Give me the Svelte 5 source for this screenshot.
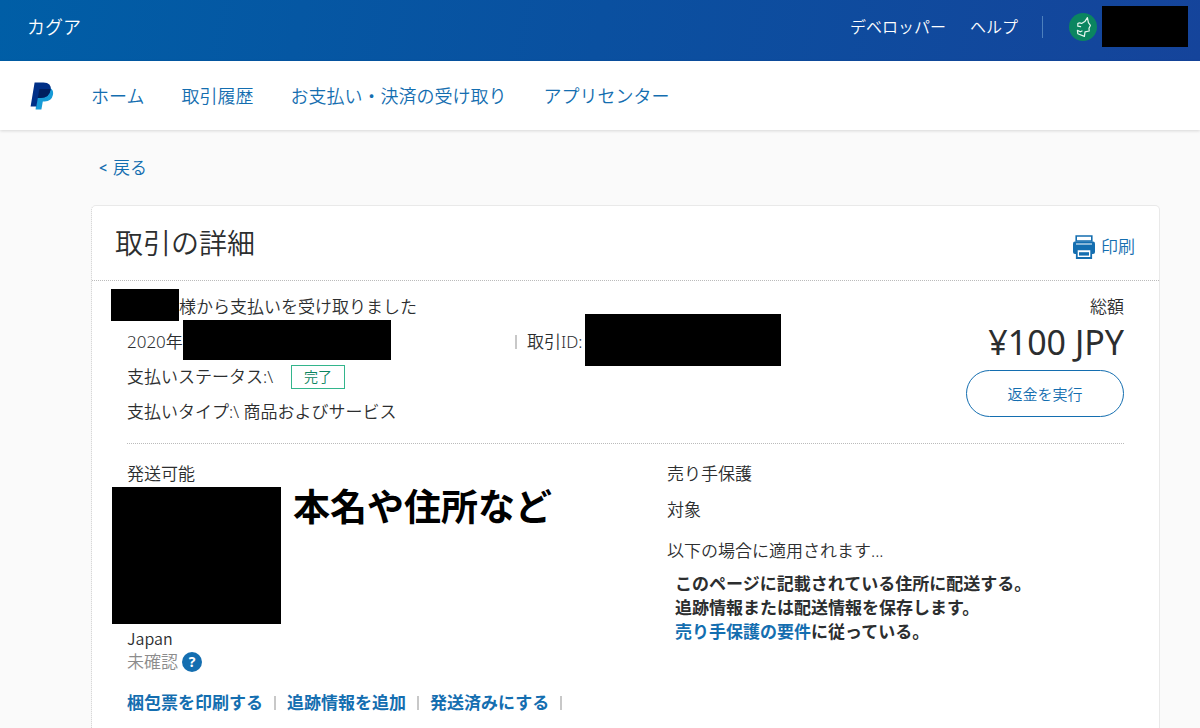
<script lang="ts">
    let navLinks = [
        "ホーム",
        "取引履歴",
        "お支払い・決済の受け取り",
        "アプリセンター"
    ];

    let shippingActions = [
        "梱包票を印刷する",
        "追跡情報を追加",
        "発送済みにする"
    ];
</script>

<div class="page">
    <header class="topbar">
        <span class="brand">カグア</span>
        <div class="account">
            <a href="#developer">デベロッパー</a>
            <a href="#help">ヘルプ</a>
            <span class="bar"></span>
            <svg class="avatar" viewBox="0 0 28 28" aria-hidden="true">
                <circle cx="14" cy="14" r="14" fill="#0b8560" />
                <path
                    d="M11.6 13.6 L8.8 13.2 L8.8 10.4 Q10.6 9.2 12.6 10.4 L15.8 8.6 L18.4 4.6 L19.4 9.6 L21.4 12.4 L20 15.2 L20.2 18 L16 18.8 L15.4 23.4 L8.8 20.8 L8.4 17.4 L11.4 18.8 L13 18"
                    fill="none"
                    stroke="#e6f6ee"
                    stroke-width="1.2"
                    stroke-linejoin="round"
                    stroke-linecap="round"
                />
            </svg>
            <span class="mask mask-account"></span>
        </div>
    </header>

    <nav class="mainnav">
        <a class="logo" href="#home" aria-label="PayPal">
            <svg viewBox="0 0 24 28">
                <path d="M8 6 H20.5 Q24 8.6 22.9 13 Q21.6 19.4 14.6 19.4 H12.8 L11.4 27.4 H5.6 Z" fill="#179bd7" />
                <path d="M4.6 0.6 H13.4 Q21.8 0.8 20.6 8 Q19.2 15.8 10.6 16 H7.8 L6.4 24.4 H0.6 Z" fill="#003087" />
                <path d="M9.4 7 H20.6 Q19.6 15.8 10.6 16 H7.8 Z" fill="#001f5f" />
            </svg>
        </a>
        {#each navLinks as link}
            <a href="#nav">{link}</a>
        {/each}
    </nav>

    <main>
        <a class="back" href="#back"><b>&lt;</b>戻る</a>

        <section class="card">
            <div class="card-header">
                <h1>取引の詳細</h1>
                <a class="print" href="#print">
                    <svg viewBox="0 0 24 24" aria-hidden="true">
                        <path d="M4.2 1 H19.8 V6 H4.2 Z" fill="#fff" stroke="#146eb0" stroke-width="1.6" />
                        <path d="M3 6.4 H21 Q23 6.4 23 8.4 V17 Q23 19 21 19 H3 Q1 19 1 17 V8.4 Q1 6.4 3 6.4 Z" fill="#146eb0" />
                        <path d="M4 9 H20" stroke="#fff" stroke-width="1" />
                        <path d="M4.8 14.4 H19.2 V23 H4.8 Z" fill="#fff" stroke="#146eb0" stroke-width="1.8" />
                        <path d="M7 17.2 H17 V20.6 H7 Z" fill="#146eb0" />
                    </svg>
                    <span>印刷</span>
                </a>
            </div>

            <div class="card-body">
                <div class="summary">
                    <div class="facts">
                        <div class="row">
                            <span class="mask mask-name"></span>
                            <span>様から支払いを受け取りました</span>
                        </div>
                        <div class="row split">
                            <div class="row">
                                <span>2020年</span>
                                <span class="mask mask-date"></span>
                            </div>
                            <div class="row">
                                <span class="pipe"></span>
                                <span class="txn">取引ID:</span>
                                <span class="mask mask-id"></span>
                            </div>
                        </div>
                        <div class="row">
                            <span>支払いステータス:\</span>
                            <span class="badge">完了</span>
                        </div>
                        <div class="row">支払いタイプ:\ 商品およびサービス</div>
                    </div>
                    <div class="total">
                        <div class="row">総額</div>
                        <div class="amount">¥100 JPY</div>
                        <button type="button">返金を実行</button>
                    </div>
                </div>

                <div class="details">
                    <div class="shipping">
                        <h2>発送可能</h2>
                        <div class="address">
                            <span class="mask mask-address"></span>
                            <strong>本名や住所など</strong>
                        </div>
                        <p class="country">Japan</p>
                        <p class="status">
                            未確認
                            <button type="button" class="help" aria-label="ヘルプ">?</button>
                        </p>
                        <div class="actions">
                            {#each shippingActions as action}
                                <a href="#action">{action}</a>
                                <span class="pipe"></span>
                            {/each}
                        </div>
                    </div>
                    <div class="protection">
                        <h2>売り手保護</h2>
                        <p class="eligible">対象</p>
                        <p class="applies">以下の場合に適用されます...</p>
                        <ul>
                            <li>このページに記載されている住所に配送する。</li>
                            <li>追跡情報または配送情報を保存します。</li>
                            <li><a href="#terms">売り手保護の要件</a>に従っている。</li>
                        </ul>
                    </div>
                </div>
            </div>
        </section>
    </main>
</div>

<style>
    :global(body) {
        margin: 0;
        background: #fafafa;
    }

    .page {
        display: flex;
        flex-direction: column;
        min-height: 100vh;
        font-family: "Noto Sans", "Noto Sans CJK JP", sans-serif;
        font-size: 17px;
        font-weight: 350;
        line-height: 24px;
        color: #2c2e2f;
    }

    a {
        color: #146eb0;
        text-decoration: none;
    }

    h1, h2, p, ul {
        margin: 0;
        padding: 0;
        font-weight: 350;
    }

    .mask {
        flex: none;
        background: #000;
    }

    .topbar {
        display: flex;
        justify-content: space-between;
        height: 53px;
        padding: 0 12px 8px 27px;
        background: linear-gradient(100deg, #005ea6, #0a50a0 50%, #15449b);
        color: #fff;
        align-items: center;
    }

    .brand {
        font-size: 18px;
    }

    .account {
        display: flex;
        align-items: center;
    }

    .account a {
        margin-right: 24px;
        color: #fff;
        font-size: 16px;
    }

    .bar {
        width: 1px;
        height: 22px;
        margin-right: 26px;
        background: #4d80bd;
    }

    .avatar {
        width: 28px;
        height: 28px;
        margin-right: 5px;
    }

    .mask-account {
        width: 86px;
        height: 41px;
    }

    .mainnav {
        display: flex;
        align-items: center;
        gap: 37px;
        height: 69px;
        padding-left: 30px;
        background: #fff;
        font-size: 18px;
        box-shadow: 0 1px 3px rgba(0, 0, 0, 0.14);
    }

    .logo {
        width: 24px;
        height: 28px;
    }

    .logo svg {
        display: block;
    }

    main {
        display: flex;
        flex-direction: column;
        flex: 1;
        padding: 26px 40px 0 91px;
    }

    .back {
        display: flex;
        align-self: flex-start;
        gap: 6px;
        padding-left: 8px;
    }

    .back b {
        font-size: 14px;
        font-weight: 600;
    }

    .card {
        flex: 1;
        margin-top: 25px;
        border: 1px solid #e9e9e9;
        border-bottom: none;
        border-left: 1px dotted #ccc;
        border-radius: 5px 5px 0 0;
        background: #fff;
    }

    .card-header {
        display: flex;
        justify-content: space-between;
        align-items: center;
        height: 74px;
        padding: 0 24px 0 23px;
        border-bottom: 1px dotted #bbb;
    }

    h1 {
        font-size: 28px;
        line-height: 40px;
    }

    .print {
        display: flex;
        align-items: center;
        gap: 5px;
        padding-top: 8px;
    }

    .print svg {
        width: 24px;
        height: 24px;
    }

    .card-body {
        padding: 8px 35px 0;
    }

    .summary {
        display: flex;
        justify-content: space-between;
        padding-bottom: 14px;
        border-bottom: 1px dotted #bbb;
    }

    .facts {
        flex: 1;
    }

    .row {
        display: flex;
        align-items: center;
        height: 35px;
    }

    .row .mask {
        margin-bottom: 3px;
    }

    .split {
        display: grid;
        grid-template-columns: 388px 1fr;
    }

    .pipe {
        width: 2px;
        height: 14px;
        background: #c8c8c8;
    }

    .txn {
        margin: 0 2px 0 10px;
    }

    .mask-name {
        width: 68px;
        height: 32px;
        margin-left: -16px;
    }

    .mask-date {
        width: 208px;
        height: 40px;
    }

    .mask-id {
        width: 196px;
        height: 52px;
    }

    .badge {
        margin-left: 18px;
        padding: 0 12px;
        border: 1px solid #33b58c;
        color: #0b8560;
        font-size: 14px;
        line-height: 22px;
    }

    .total {
        display: flex;
        flex-direction: column;
        align-items: flex-end;
    }

    .amount {
        height: 46px;
        font-size: 34px;
        font-weight: 400;
        line-height: 36px;
    }

    .total button {
        width: 158px;
        height: 47px;
        border: 1px solid #146eb0;
        border-radius: 24px;
        background: #fff;
        color: #146eb0;
        font: inherit;
        font-size: 15px;
    }

    .details {
        display: grid;
        grid-template-columns: 540fr 457fr;
        padding-top: 18px;
    }

    h2 {
        font-size: 17px;
        line-height: 24px;
    }

    .address {
        display: flex;
        gap: 12px;
        margin: 1px 0 2px -15px;
    }

    .address strong {
        color: #000;
        font-size: 37px;
        font-weight: 700;
        line-height: 40px;
    }

    .mask-address {
        width: 169px;
        height: 137px;
    }

    .country {
        font-family: "Noto Sans CJK JP", sans-serif;
        font-size: 16px;
    }

    .status {
        display: flex;
        align-items: center;
        gap: 4px;
        color: #8c8c8c;
    }

    .help {
        width: 20px;
        height: 20px;
        padding: 0;
        border: none;
        border-radius: 50%;
        background: #146eb0;
        color: #fff;
        font: bold 14px/20px "Noto Sans", sans-serif;
    }

    .actions {
        display: flex;
        align-items: center;
        gap: 11px;
        margin-top: 17px;
        font-weight: 700;
    }

    .eligible {
        margin-top: 12px;
    }

    .applies {
        margin: 17px 0 9px;
    }

    ul {
        padding-left: 8px;
        list-style: none;
    }

    li {
        font-weight: 700;
    }
</style>
